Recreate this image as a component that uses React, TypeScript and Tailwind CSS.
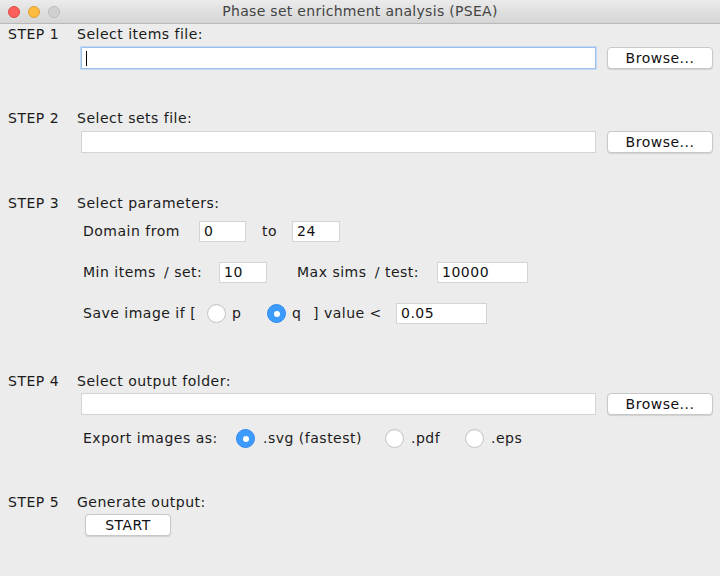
import React from 'react';

const font = { fontFamily: '"DejaVu Sans", "Liberation Sans", sans-serif' };

function TextBox({ value = '', className = '', focused = false }: { value?: string; className?: string; focused?: boolean }) {
    return (
        <div
            className={`h-[21px] shrink-0 bg-white flex items-center pl-[4px] text-[#111] ${
                focused ? 'border border-[#9cc0ea] shadow-[0_0_0_1px_#c4daf3]' : 'border border-[#d4d4d4]'
            } ${className}`}
        >
            {focused && <span className="w-px h-[15px] bg-black" />}
            {value}
        </div>
    );
}

function Button({ label, className = '' }: { label: string; className?: string }) {
    return (
        <div
            className={`h-[22px] shrink-0 bg-white rounded-[4px] border border-[#c8c8c8] shadow-[0_1px_1px_rgba(0,0,0,0.12)] flex items-center justify-center text-[#111] ${className}`}
        >
            {label}
        </div>
    );
}

function Radio({ checked }: { checked: boolean }) {
    return checked ? (
        <span className="block shrink-0 w-[19px] h-[19px] rounded-full bg-[#3d9bfd] border border-[#2f88f0] flex items-center justify-center">
            <span className="block w-[6px] h-[6px] rounded-full bg-white" />
        </span>
    ) : (
        <span className="block shrink-0 w-[19px] h-[19px] rounded-full bg-white border border-[#c4c4c4] shadow-[inset_0_1px_1px_rgba(0,0,0,0.05)]" />
    );
}

function StepLabel({ step, title, className = '' }: { step: number; title: string; className?: string }) {
    return (
        <div className={`flex h-[16px] items-center ${className}`}>
            <span className="w-[69px]">STEP {step}</span>
            <span>{title}</span>
        </div>
    );
}

export default function App() {
    return (
        <div className="w-[720px] h-[576px] bg-[#ececec] text-[14px] tracking-[0.5px] text-[#1a1a1a] overflow-hidden" style={font}>
            {/* Title bar */}
            <div className="h-[24px] relative flex items-center justify-center bg-gradient-to-b from-[#ebebeb] to-[#d5d5d5] border-b border-[#b9b9b9]">
                <div className="absolute left-[8px] top-[6px] flex gap-[8px]">
                    <span className="w-[12px] h-[12px] rounded-full bg-[#fc605c] border border-[#de4a45]" />
                    <span className="w-[12px] h-[12px] rounded-full bg-[#fdbc40] border border-[#dea034]" />
                    <span className="w-[12px] h-[12px] rounded-full bg-[#d0d0d0] border border-[#bcbcbc]" />
                </div>
                <span className="tracking-[0.3px] text-[#444]">Phase set enrichment analysis (PSEA)</span>
            </div>

            <div className="pl-[8px] pr-[7px]">
                {/* Step 1 */}
                <StepLabel step={1} title="Select items file:" className="mt-[2px]" />
                <div className="flex items-center mt-[5px] ml-[73px]">
                    <TextBox focused className="w-[515px] !h-[22px]" />
                    <Button label="Browse..." className="ml-[11px] w-[106px]" />
                </div>

                {/* Step 2 */}
                <StepLabel step={2} title="Select sets file:" className="mt-[41px]" />
                <div className="flex items-center mt-[5px] ml-[73px]">
                    <TextBox className="w-[515px] !h-[22px]" />
                    <Button label="Browse..." className="ml-[11px] w-[106px]" />
                </div>

                {/* Step 3 */}
                <StepLabel step={3} title="Select parameters:" className="mt-[42px]" />
                <div className="ml-[75px]">
                    <div className="flex items-center mt-[10px]">
                        <span className="w-[116px]">Domain from</span>
                        <TextBox value="0" className="w-[47px]" />
                        <span className="ml-[16px] w-[30px]">to</span>
                        <TextBox value="24" className="w-[48px]" />
                    </div>
                    <div className="flex items-center mt-[20px]">
                        <span className="w-[136px]">Min items &thinsp;/ set:</span>
                        <TextBox value="10" className="w-[48px]" />
                        <span className="ml-[30px] w-[140px]">Max sims &thinsp;/ test:</span>
                        <TextBox value="10000" className="w-[91px]" />
                    </div>
                    <div className="flex items-center mt-[20px]">
                        <span className="w-[124px]">Save image if [</span>
                        <Radio checked={false} />
                        <span className="ml-[6px] w-[35px]">p</span>
                        <Radio checked />
                        <span className="ml-[6px] w-[21px]">q</span>
                        <span className="w-[83px]">] value &lt;</span>
                        <TextBox value="0.05" className="w-[91px]" />
                    </div>
                </div>

                {/* Step 4 */}
                <StepLabel step={4} title="Select output folder:" className="mt-[49px]" />
                <div className="flex items-center mt-[4px] ml-[73px]">
                    <TextBox className="w-[515px] !h-[22px]" />
                    <Button label="Browse..." className="ml-[11px] w-[106px]" />
                </div>
                <div className="flex items-center mt-[13px] ml-[75px]">
                    <span className="w-[153px]">Export images as:</span>
                    <Radio checked />
                    <span className="ml-[8px] w-[122px]">.svg (fastest)</span>
                    <Radio checked={false} />
                    <span className="ml-[7px] w-[54px]">.pdf</span>
                    <Radio checked={false} />
                    <span className="ml-[7px]">.eps</span>
                </div>

                {/* Step 5 */}
                <StepLabel step={5} title="Generate output:" className="mt-[45px]" />
                <Button label="START" className="mt-[4px] ml-[77px] w-[86px]" />
            </div>
        </div>
    );
}
